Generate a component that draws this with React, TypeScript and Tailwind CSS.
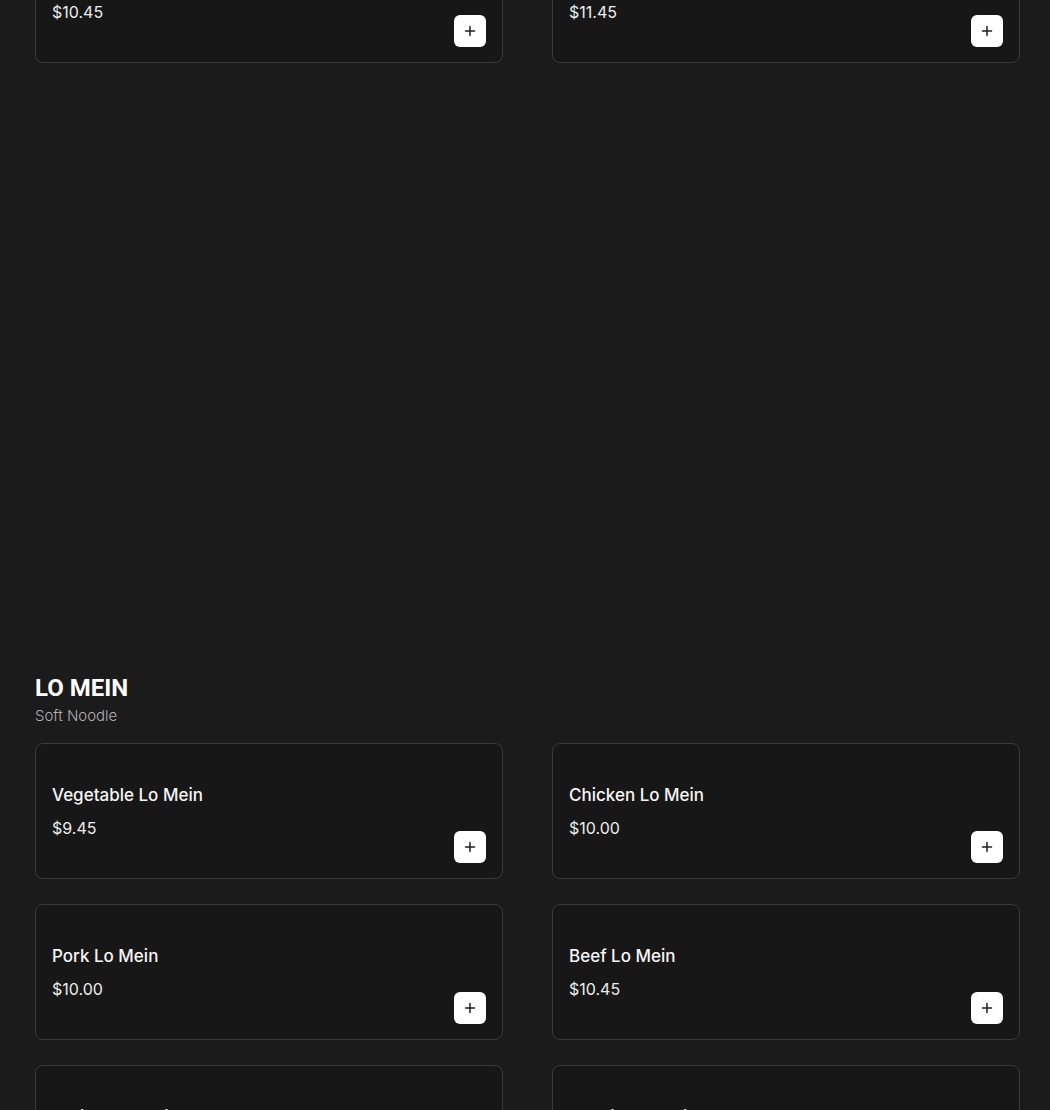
import React from "react";

type Item = { name: string; price: string };

function PlusIcon() {
  return (
    <svg width="12" height="12" viewBox="0 0 12 12" fill="none">
      <path d="M6 1.5v9M1.5 6h9" stroke="#1f1f1f" strokeWidth="1.5" strokeLinecap="round" />
    </svg>
  );
}

function Card({ item }: { item: Item }) {
  return (
    <div className="h-[136px] rounded-[8px] border border-[#3a3a3a] bg-[#171717] flex justify-between items-end px-4 pt-[39px] pb-[15px]">
      <div className="flex flex-col self-start">
        <div className="text-[17px] leading-[24px] font-medium text-[#f5f5f5] [font-family:Inter,sans-serif]">
          {item.name}
        </div>
        <div className="mt-[9px] text-[16px] leading-[24px] text-[#ededed] [font-family:Inter,sans-serif]">
          {item.price}
        </div>
      </div>
      <button className="w-8 h-8 rounded-[6px] bg-white flex items-center justify-center">
        <PlusIcon />
      </button>
    </div>
  );
}

const top: Item[] = [
  { name: "Shrimp Chow Mein", price: "$10.45" },
  { name: "House Special Chow Mein", price: "$11.45" },
];

const loMein: Item[] = [
  { name: "Vegetable Lo Mein", price: "$9.45" },
  { name: "Chicken Lo Mein", price: "$10.00" },
  { name: "Pork Lo Mein", price: "$10.00" },
  { name: "Beef Lo Mein", price: "$10.45" },
  { name: "Shrimp Lo Mein", price: "$10.45" },
  { name: "Special Lo Mein", price: "$11.45" },
];

export default function App() {
  return (
    <div className="h-[1110px] overflow-hidden bg-[#1b1b1b] pl-[35px] pr-[30px] [font-family:Inter,sans-serif]">
      <div className="-mt-[73px] grid grid-cols-2 gap-x-[49px]">
        {top.map((it) => (
          <Card key={it.name} item={it} />
        ))}
      </div>
      <div className="h-[609px]" />
      <div>
        <h2 className="text-[24px] leading-[32px] font-bold text-white [font-family:Roboto,sans-serif]">
          LO MEIN
        </h2>
        <p className="mt-[2px] text-[15px] leading-[20px] font-light text-[#b0b0b0] [font-family:Inter,sans-serif]">
          Soft Noodle
        </p>
      </div>
      <div className="mt-[17px] grid grid-cols-2 gap-x-[49px] gap-y-[25px]">
        {loMein.map((it) => (
          <Card key={it.name} item={it} />
        ))}
      </div>
    </div>
  );
}
